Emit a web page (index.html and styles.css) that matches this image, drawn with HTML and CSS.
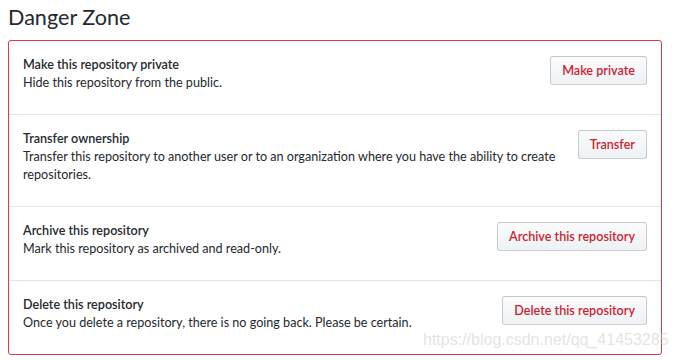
FILE: index.html
```html
<!DOCTYPE html>
<html lang="en">
<head>
    <meta charset="UTF-8">
    <title>Danger Zone</title>
    <link rel="stylesheet" href="styles.css">
</head>
<body>

<div class="page">
    <h2 class="subhead">Danger Zone</h2>

    <ul class="danger-box">
        <li class="danger-row">
            <div class="danger-text">
                <strong>Make this repository private</strong>
                <p>Hide this repository from the public.</p>
            </div>
            <button class="btn-danger">Make private</button>
        </li>
        <li class="danger-row">
            <div class="danger-text">
                <strong>Transfer ownership</strong>
                <p>Transfer this repository to another user or to an organization where you have the ability to create repositories.</p>
            </div>
            <button class="btn-danger">Transfer</button>
        </li>
        <li class="danger-row">
            <div class="danger-text">
                <strong>Archive this repository</strong>
                <p>Mark this repository as archived and read-only.</p>
            </div>
            <button class="btn-danger">Archive this repository</button>
        </li>
        <li class="danger-row">
            <div class="danger-text">
                <strong>Delete this repository</strong>
                <p>Once you delete a repository, there is no going back. Please be certain.</p>
            </div>
            <button class="btn-danger">Delete this repository</button>
        </li>
    </ul>
</div>

<!-- watermark from the blog the shot came from -->
<div class="watermark">https://blog.csdn.net/qq_41453285</div>

</body>
</html>
```
FILE: styles.css
```css
body {
    font-family: Lato, "Open Sans", sans-serif;
    font-size: 12.6px;
    color: #24292e;
    margin: 0;
    background-color: #fff;
}
.page {
    width: 654px;
    padding: 4px 0 0 8px;
}
.subhead {
    font-size: 21.6px;
    font-weight: normal;
    line-height: 27px;
    margin: 0 0 9px;
}
.danger-box {
    list-style: none;
    margin: 0;
    padding: 0;
    border: 1px solid #d73a49;
    border-radius: 3px;
}
.danger-row {
    display: flex;
    align-items: flex-start;
    gap: 12px;
    padding: 15px 14px 22px 14px;
    line-height: 18px;
}
.danger-row + .danger-row {
    border-top: 1px solid #e1e4e8;
}
.danger-text {
    flex: 1;
}
.danger-text strong {
    display: block;
    font-weight: 600;
}
.danger-text p {
    margin: 0;
}
.btn-danger {
    flex-shrink: 0;
    height: 29px;
    padding: 0 11px;
    font-family: inherit;
    font-size: 12.6px;
    font-weight: 600;
    color: #cb2431;
    background-image: linear-gradient(-180deg, #fafbfc 0%, #eff3f6 90%);
    border: 1px solid rgba(27, 31, 35, 0.2);
    border-radius: 3px;
    cursor: pointer;
}
.watermark {
    position: absolute;
    left: 423px;
    top: 331px;
    font-family: "Liberation Sans", Arial, sans-serif;
    font-size: 16px;
    color: rgba(200, 200, 200, 0.5);
    white-space: nowrap;
}
```
